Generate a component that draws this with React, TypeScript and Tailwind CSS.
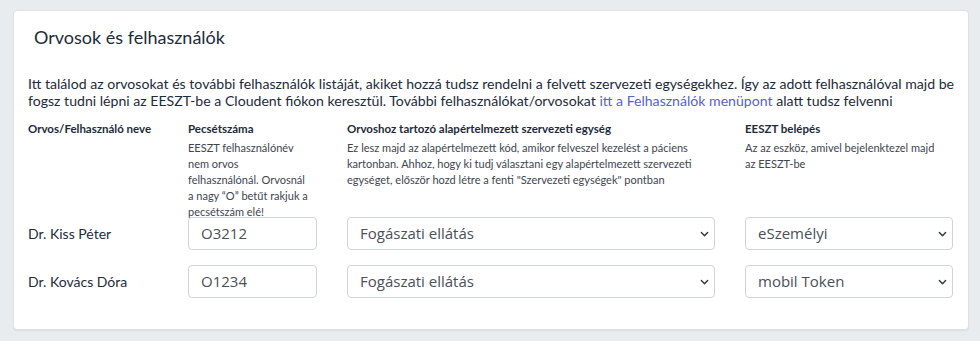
import React from "react";

const font = { fontFamily: "Lato, 'Noto Sans', sans-serif" };

function Chevron() {
  return (
    <svg width="9" height="9" viewBox="0 0 16 16" className="absolute right-[5px] top-1/2 -translate-y-1/2 pointer-events-none">
      <path d="M2.5 5.5l5.5 5.5 5.5-5.5" fill="none" stroke="#343a40" strokeWidth="2.6" strokeLinecap="round" strokeLinejoin="round" />
    </svg>
  );
}

function Select({ value }: { value: string }) {
  return (
    <div className="relative h-[33px] w-full rounded-[4px] border border-[#ced4da] bg-white">
      <div className="flex h-full items-center pl-[12px] text-[15px] text-[#495057]" style={{ fontFamily: "'Open Sans', 'Noto Sans', sans-serif" }}>{value}</div>
      <Chevron />
    </div>
  );
}

function Input({ value }: { value: string }) {
  return (
    <div className="flex h-[33px] w-full items-center rounded-[4px] border border-[#ced4da] bg-white pl-[12px] text-[15px] text-[#495057]" style={{ fontFamily: "'Open Sans', 'Noto Sans', sans-serif" }}>
      {value}
    </div>
  );
}

export default function App() {
  const rows = [
    { name: "Dr. Kiss Péter", code: "O3212", unit: "Fogászati ellátás", login: "eSzemélyi" },
    { name: "Dr. Kovács Dóra", code: "O1234", unit: "Fogászati ellátás", login: "mobil Token" },
  ];
  return (
    <div className="h-[341px] w-[980px] bg-[#e9ecef] pt-[10px] pl-[13px]" style={font}>
      <div className="h-[320px] w-[956px] rounded-[4px] border border-[#dee2e6] bg-white pl-[14px] text-[#1d2b3a] shadow-[0_1px_1px_rgba(0,0,0,0.06)]">
        <h1 className="pl-[6px] pt-[14px] text-[18px] leading-[24px] text-[#1d2b3a]">Orvosok és felhasználók</h1>
        <p className="mt-[26px] text-[14.1px] leading-[17px]">
          Itt találod az orvosokat és további felhasználók listáját, akiket hozzá tudsz rendelni a felvett szervezeti egységekhez. Így az adott felhasználóval majd be
          <br />
          fogsz tudni lépni az EESZT-be a Cloudent fiókon keresztül. További felhasználókat/orvosokat{" "}
          <span className="text-[#5763c5]">itt a Felhasználók menüpont</span> alatt tudsz felvenni
        </p>
        <div className="mt-[12px] grid grid-cols-[130px_129px_368px_208px] gap-x-[30px]">
          <div className="text-[11.5px] font-bold leading-[16px]">Orvos/Felhasználó neve</div>
          <div className="text-[11.5px] font-bold leading-[16px]">Pecsétszáma</div>
          <div className="text-[11.5px] font-bold leading-[16px]">Orvoshoz tartozó alapértelmezett szervezeti egység</div>
          <div className="text-[11.5px] font-bold leading-[16px]">EESZT belépés</div>
          <div />
          <div className="mt-[3px] text-[11px] leading-[16px] text-[#3d4550]">
            EESZT felhasználónév
            <br />
            nem orvos
            <br />
            felhasználónál. Orvosnál
            <br />
            a nagy “O” betűt rakjuk a
            <br />
            pecsétszám elé!
          </div>
          <div className="mt-[3px] text-[11px] leading-[16px] text-[#3d4550]">
            Ez lesz majd az alapértelmezett kód, amikor felveszel kezelést a páciens
            <br />
            kartonban. Ahhoz, hogy ki tudj választani egy alapértelmezett szervezeti
            <br />
            egységet, először hozd létre a fenti "Szervezeti egységek" pontban
          </div>
          <div className="mt-[3px] text-[11px] leading-[16px] text-[#3d4550]">
            Az az eszköz, amivel bejelenktezel majd
            <br />
            az EESZT-be
          </div>
        </div>
        <div className="mt-[-3px] flex flex-col gap-[15px]">
          {rows.map((r) => (
            <div key={r.name} className="grid grid-cols-[130px_129px_368px_208px] items-center gap-x-[30px]">
              <div className="text-[14px]">{r.name}</div>
              <Input value={r.code} />
              <Select value={r.unit} />
              <Select value={r.login} />
            </div>
          ))}
        </div>
      </div>
    </div>
  );
}
